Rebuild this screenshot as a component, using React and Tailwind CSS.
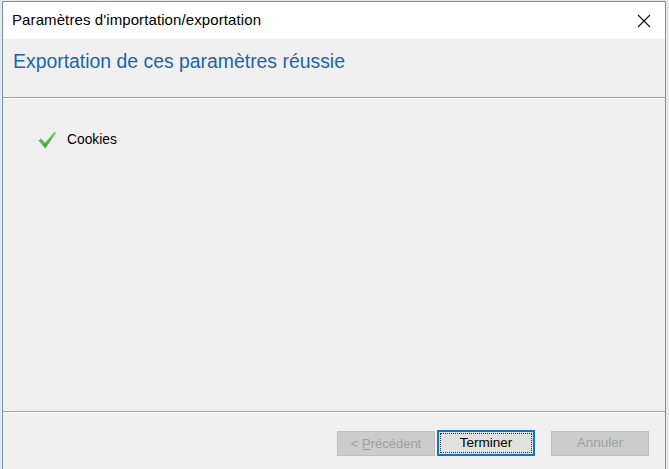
import React from "react";

export default function App() {
  const font = { fontFamily: '"Liberation Sans", Arial, sans-serif' };
  return (
    <div className="w-[669px] h-[469px] bg-[#e8e8e8] overflow-hidden relative" style={font}>
      <div className="absolute left-[2px] top-[1px] w-[664px] h-[480px] border border-[#7191b8] bg-[#f0f0f0] flex flex-col">
        {/* Title bar */}
        <div className="h-[37px] bg-white flex items-center justify-between pl-[9px] pr-[14px] shrink-0">
          <span className="text-[15px] text-[#000] tracking-[0.1px]">Paramètres d'importation/exportation</span>
          <svg width="14" height="14" viewBox="0 0 14 14">
            <path d="M1 1 L13 13 M13 1 L1 13" stroke="#111" strokeWidth="1.1" fill="none" />
          </svg>
        </div>
        {/* Header */}
        <div className="h-[58px] shrink-0 pl-[10px] pt-[8px]">
          <span className="text-[19.4px] text-[#1a64b0]">Exportation de ces paramètres réussie</span>
        </div>
        <div className="h-px bg-[#a0a0a0] shrink-0" />
        <div className="h-px bg-white shrink-0" />
        {/* Content */}
        <div className="h-[312px] shrink-0 pl-[34px] pt-[31px]">
          <div className="flex items-center gap-[10px]">
            <svg width="20" height="20" viewBox="0 0 20 20">
              <defs>
                <linearGradient id="g" x1="0" y1="0" x2="0" y2="1">
                  <stop offset="0" stopColor="#7fd16f" />
                  <stop offset="1" stopColor="#3fa13a" />
                </linearGradient>
              </defs>
              <path d="M1.5 10.5 L4 8.5 L8 13 L17.5 1.5 L19 3 L8.3 18.5 Z" fill="url(#g)" />
            </svg>
            <span className="text-[13.8px] text-black">Cookies</span>
          </div>
        </div>
        <div className="h-px bg-[#a0a0a0] shrink-0" />
        <div className="h-px bg-white shrink-0" />
        {/* Footer */}
        <div className="flex items-start pt-[18px] pl-[334px]">
          <div className="w-[98px] h-[25px] bg-[#cccccc] border border-[#bfbfbf] flex items-center justify-center text-[13px] text-[#a0a0a0]">
            <span>&lt;&nbsp;<span className="underline">P</span>récédent</span>
          </div>
          <div className="ml-[2px] w-[98px] h-[26px] -mt-[1px] bg-[#e1e1e1] border-2 border-[#0078d7] flex items-center justify-center p-[1px]">
            <div className="w-full h-full border border-dotted border-[#333] flex items-center justify-center text-[13.5px] text-black">
              Terminer
            </div>
          </div>
          <div className="ml-[16px] w-[98px] h-[25px] bg-[#cccccc] border border-[#bfbfbf] flex items-center justify-center text-[13.5px] text-[#a0a0a0]">
            Annuler
          </div>
        </div>
      </div>
    </div>
  );
}
